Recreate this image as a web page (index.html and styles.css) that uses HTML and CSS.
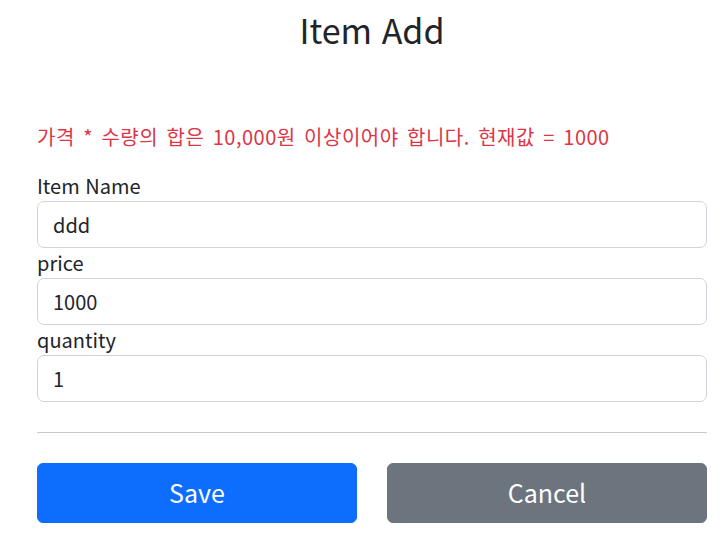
FILE: index.html
```html
<!DOCTYPE html>
<html lang="ko">
<head>
<meta charset="utf-8">
<title>Item Add</title>
<link rel="stylesheet" href="styles.css">
</head>
<body>
<div class="container">
  <div class="header">
    <h2 class="title">Item Add</h2>
  </div>
  <form class="form">
    <p class="field-error">가격 * 수량의 합은 10,000원 이상이어야 합니다. 현재값 = 1000</p>
    <div class="field">
      <label class="label" for="itemName">Item Name</label>
      <input class="control" id="itemName" type="text" value="ddd">
    </div>
    <div class="field">
      <label class="label" for="price">price</label>
      <input class="control" id="price" type="text" value="1000">
    </div>
    <div class="field">
      <label class="label" for="quantity">quantity</label>
      <input class="control" id="quantity" type="text" value="1">
    </div>
    <hr class="divider">
    <div class="actions">
      <button class="btn btn-primary" type="button">Save</button>
      <button class="btn btn-secondary" type="button">Cancel</button>
    </div>
  </form>
</div>
</body>
</html>
```
FILE: styles.css
```css
html {
  font-size: 20px;
}
body {
  margin: 0;
  font-family: "Noto Sans CJK KR", "Noto Sans", sans-serif;
  font-size: 1rem;
  line-height: 1.5;
  color: #212529;
  background: #fff;
}
.container {
  width: 670px;
  margin-left: 37px;
}
.header {
  padding-top: 10px;
  padding-bottom: 61px;
  text-align: center;
}
.title {
  margin: 0 0 10px;
  font-size: 34px;
  font-weight: 400;
  line-height: 1.2;
}
.field-error {
  margin: 0 0 19px;
  color: #dc3545;
  letter-spacing: 0.5px;
  word-spacing: 2.3px;
}
.field {
  display: flex;
  flex-direction: column;
}
.label {
  display: block;
}
.control {
  display: block;
  box-sizing: border-box;
  width: 100%;
  height: 47px;
  padding: 7.5px 15px;
  font: inherit;
  color: #212529;
  background: #fff;
  border: 1px solid #ced4da;
  border-radius: 7px;
  outline: none;
}
.divider {
  margin: 30px 0;
  border: 0;
  border-top: 1px solid #c8c9ca;
  height: 0;
}
.actions {
  display: grid;
  grid-template-columns: 1fr 1fr;
  column-gap: 30px;
}
.btn {
  height: 60px;
  padding: 10px 20px;
  font: inherit;
  font-size: 25px;
  line-height: 1.5;
  color: #fff;
  border: 1px solid transparent;
  border-radius: 6px;
  cursor: pointer;
}
.btn-primary {
  background: #0d6efd;
  border-color: #0d6efd;
}
.btn-secondary {
  background: #6c757d;
  border-color: #6c757d;
}
```
